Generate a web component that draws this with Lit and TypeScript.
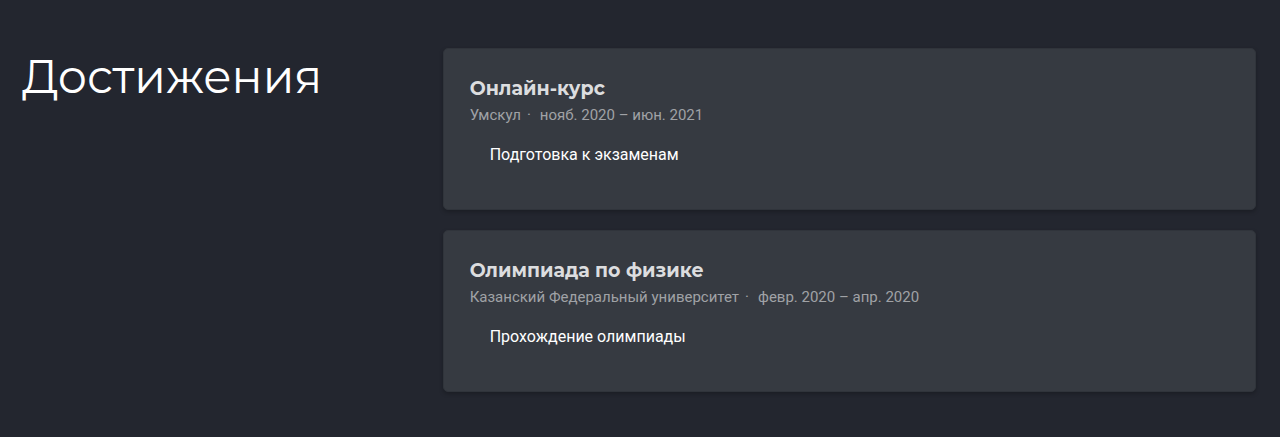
import { LitElement, html, css } from "lit";
import { customElement, property } from "lit/decorators.js";

interface Achievement {
  title: string;
  place: string;
  period: string;
  note: string;
}

const achievements: Achievement[] = [
  {
    title: "Онлайн-курс",
    place: "Умскул",
    period: "нояб. 2020 – июн. 2021",
    note: "Подготовка к экзаменам",
  },
  {
    title: "Олимпиада по физике",
    place: "Казанский Федеральный университет",
    period: "февр. 2020 – апр. 2020",
    note: "Прохождение олимпиады",
  },
];

@customElement("achievement-card")
export class AchievementCard extends LitElement {
  @property({ attribute: false }) item!: Achievement;

  static styles = css`
    :host {
      display: block;
    }
    .card {
      padding: 26px 26px 42px;
      border: 1px solid #30343b;
      border-radius: 5px;
      background: #363a41;
      box-shadow: 0 2px 4px rgba(0, 0, 0, 0.24);
    }
    .title {
      margin: 0;
      font: 700 19px/28px Montserrat, Inter, sans-serif;
      color: #dcdddf;
    }
    .meta {
      display: flex;
      flex-wrap: wrap;
      margin: 0;
      font: 400 15px/24px Roboto, sans-serif;
      color: #a0a2a6;
    }
    .dot {
      margin: 0 9px 0 6px;
    }
    .note {
      margin: 16px 0 0;
      padding-left: 20px;
      font: 400 16px/24px Roboto, sans-serif;
      color: #fff;
    }
  `;

  render() {
    const { title, place, period, note } = this.item;
    return html`
      <article class="card">
        <h3 class="title">${title}</h3>
        <p class="meta"><span>${place}</span><span class="dot">·</span><span>${period}</span></p>
        <p class="note">${note}</p>
      </article>
    `;
  }
}

@customElement("app-root")
export class AppRoot extends LitElement {
  static styles = css`
    :host {
      display: block;
      box-sizing: border-box;
      min-height: 100vh;
      padding: 48px 24px 45px 22px;
      background: #23262f;
    }
    .section {
      display: grid;
      grid-template-columns: 1fr 2fr;
      gap: 14px;
    }
    .heading {
      margin: 0;
      font: 400 46px/58px Montserrat, Inter, sans-serif;
      color: #fff;
    }
    .list {
      display: grid;
      gap: 20px;
    }
    @media (max-width: 900px) {
      .section {
        grid-template-columns: 1fr;
      }
    }
  `;

  render() {
    return html`
      <section class="section">
        <h2 class="heading">Достижения</h2>
        <div class="list">
          ${achievements.map((item) => html`<achievement-card .item=${item}></achievement-card>`)}
        </div>
      </section>
    `;
  }
}
